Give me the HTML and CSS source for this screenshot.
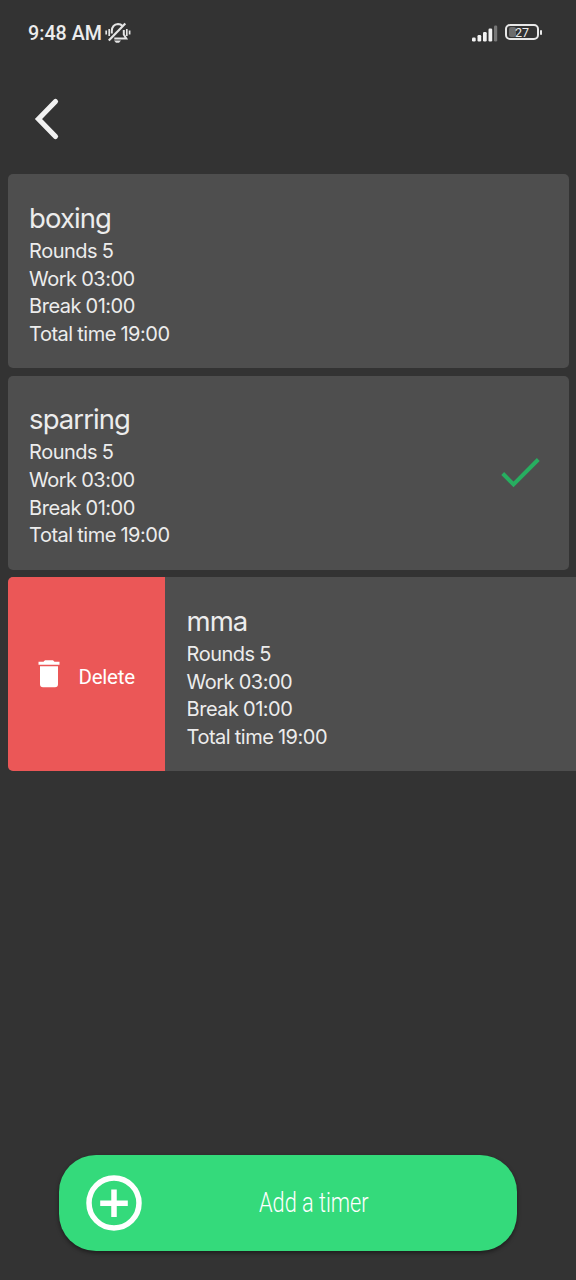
FILE: index.html
```html
<!DOCTYPE html>
<html lang="en">
<head>
<meta charset="utf-8">
<title>Timers</title>
<link rel="stylesheet" href="styles.css">
</head>
<body>
<div class="screen">
  <header class="status">
    <span class="clock">9:48 AM</span>
    <svg class="bell" width="26" height="22" viewBox="0 0 26 22" fill="none" stroke="#e4e4e4" stroke-width="2">
      <path d="M6.800 11.500V9C7 4.500 9.500 2.200 13 2C15 2 16.500 2.800 17.500 4M18.800 8V12.500L21.300 16.600H9.300"/>
      <path d="M3.800 18.500L20.300 1.500" stroke-width="2.200"/>
      <path d="M9 18.600H16L14 20.800H11Z" fill="#e4e4e4" stroke="none"/>
      <path d="M1.200 8.500V12.500M4.200 7V14M21.800 7V14M24.600 8.500V12.500" stroke-width="1.700"/>
    </svg>
    <svg class="signal" width="26" height="17" viewBox="0 0 26 17" fill="#f2f2f2">
      <rect x="0" y="12.500" width="3.700" height="4" rx="1.200"/>
      <rect x="5.500" y="10" width="3.700" height="6.500" rx="1.200"/>
      <rect x="11" y="7" width="3.700" height="9.500" rx="1.200"/>
      <rect x="16.500" y="3.500" width="3.700" height="13" rx="1.200"/>
      <rect x="22" y="0.500" width="3.200" height="16" rx="1.200" fill="#777"/>
    </svg>
    <span class="battery"><span class="level">27</span></span>
  </header>
  <nav class="nav">
    <svg width="30" height="46" viewBox="0 0 30 46" fill="none" stroke="#f1f1f1" stroke-width="5.200" stroke-linecap="round" stroke-linejoin="miter">
      <path d="M23.500 5.500L6.500 23L23.500 40.500"/>
    </svg>
  </nav>
  <main class="list">
    <section class="card">
      <div class="info">
        <h2>boxing</h2>
        <p>Rounds 5</p>
        <p>Work 03:00</p>
        <p>Break 01:00</p>
        <p>Total time 19:00</p>
      </div>
    </section>
    <section class="card">
      <div class="info">
        <h2>sparring</h2>
        <p>Rounds 5</p>
        <p>Work 03:00</p>
        <p>Break 01:00</p>
        <p>Total time 19:00</p>
      </div>
      <svg class="check" width="40" height="32" viewBox="0 0 40 32" fill="none" stroke="#27ae60" stroke-width="4">
        <path d="M2.700 15.500L13.500 26.300L38.300 1.500"/>
      </svg>
    </section>
    <section class="card swiped">
      <div class="delete">
        <svg width="22" height="28" viewBox="0 0 22 28" fill="#fff">
          <path d="M0.500 1.700H5.500L7 0.300H15L16.500 1.700H21.500V4.700H0.500ZM2 6.200H20V24.200Q20 27.200 17 27.200H5Q2 27.200 2 24.200Z"/>
        </svg>
        <span>Delete</span>
      </div>
      <div class="info">
        <h2>mma</h2>
        <p>Rounds 5</p>
        <p>Work 03:00</p>
        <p>Break 01:00</p>
        <p>Total time 19:00</p>
      </div>
    </section>
  </main>
  <footer class="footer">
    <button class="add">
      <svg width="56" height="56" viewBox="0 0 56 56" fill="none" stroke="#fff" stroke-width="5.500">
        <circle cx="28" cy="28" r="25"/>
        <path d="M28 14.500V42M14.200 28.200H41.800"/>
      </svg>
      <span class="add-label">Add a timer</span>
    </button>
  </footer>
</div>
</body>
</html>
```

FILE: styles.css
```css
* { box-sizing: border-box; }
body {
  margin: 0;
  background: #333;
  color: #ececec;
  font-family: Inter, Roboto, sans-serif;
}
.screen {
  display: flex;
  flex-direction: column;
  width: 576px;
  height: 1280px;
  overflow: hidden;
}
.status {
  display: flex;
  align-items: center;
  height: 66px;
  padding: 0 37px 0 28px;
}
.clock {
  width: 75px;
  margin-right: 2px;
  padding-top: 1px;
  font: 500 19.700px/24px Roboto, sans-serif;
  white-space: nowrap;
}
.bell { margin-top: -1px; }
.signal { margin-left: auto; margin-right: 7px; }
.battery {
  position: relative;
  width: 34px;
  height: 16px;
  border: 2px solid #e8e8e8;
  border-radius: 5px;
  margin-top: -2px;
}
.battery::before {
  content: "";
  position: absolute;
  left: 2px;
  top: 1px;
  width: 7px;
  height: 10px;
  border-radius: 2px;
  background: #6c6c6c;
}
.battery::after {
  content: "";
  position: absolute;
  right: -5px;
  top: 4px;
  width: 2px;
  height: 5px;
  border-radius: 1px;
  background: #e8e8e8;
}
.level {
  position: relative;
  display: block;
  text-align: center;
  font: 400 12.500px/13px Roboto, sans-serif;
}
.nav {
  height: 108px;
  padding: 30px 0 0 32px;
}
.nav svg { display: block; }
.list {
  display: flex;
  flex-direction: column;
  gap: 7.500px;
  padding: 0 7.500px;
}
.card {
  display: flex;
  height: 194px;
  border-radius: 5px;
  background: #4e4e4e;
}
.info {
  padding: 26.800px 0 0 21.600px;
  white-space: nowrap;
}
.info h2 {
  margin: 0 0 1.500px;
  font-size: 27.500px;
  font-weight: 400;
  line-height: 35.500px;
  letter-spacing: -0.950px;
}
.info p {
  margin: 0;
  font-size: 20px;
  font-weight: 400;
  line-height: 27.700px;
  letter-spacing: -0.500px;
  word-spacing: -0.500px;
}
.check { margin: 82px 28.500px 0 auto; }
.swiped {
  width: 580px;
  overflow: hidden;
}
.delete {
  display: flex;
  align-items: center;
  gap: 19px;
  width: 157.500px;
  padding-left: 30px;
  background: #eb5757;
  color: #fff;
  font: 400 20.500px/28px Roboto, sans-serif;
}
.delete span {
  padding-top: 5px;
  letter-spacing: -0.250px;
}
.footer {
  margin-top: auto;
  padding: 0 59px 29.500px;
}
.add {
  display: flex;
  align-items: center;
  width: 458px;
  height: 96px;
  padding: 0 0 0 26.500px;
  border: 0;
  border-radius: 37px;
  background: #34da7b;
  color: #fff;
  box-shadow: 0 2px 4px rgba(0, 0, 0, 0.45);
}
.add-label {
  margin-left: 117px;
  font: 300 27.500px/36px Roboto, sans-serif;
  white-space: nowrap;
  transform: scaleX(0.79);
  transform-origin: left;
}
```
